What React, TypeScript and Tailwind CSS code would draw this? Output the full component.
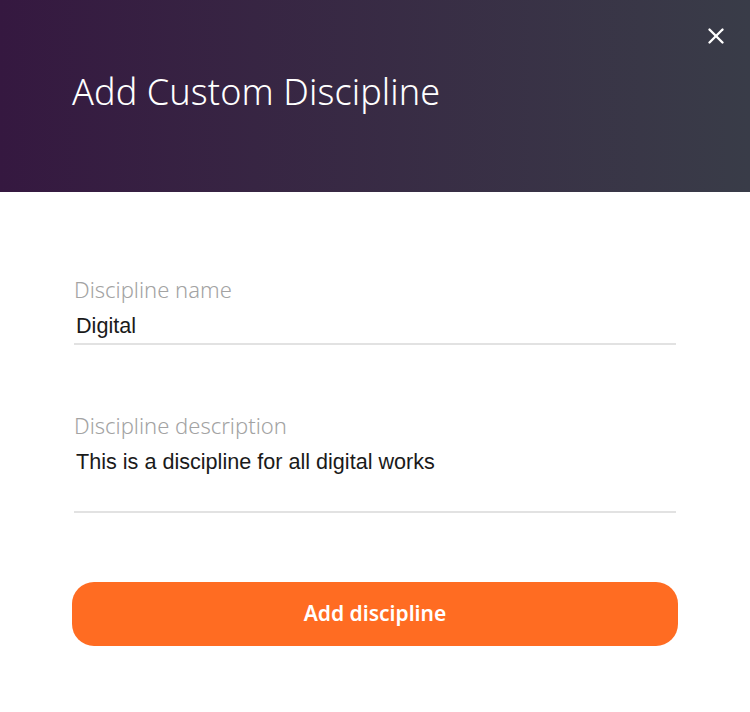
import { X } from "lucide-react";

export default function App() {
  return (
    <div className="h-[712px] w-[750px] bg-white">
      <header className="relative flex h-[192px] items-center bg-gradient-to-r from-[#351840] to-[#393c48] px-[72px]">
        <h1 className="pb-[8px] font-['Noto_Sans',sans-serif] text-[36px] font-light leading-none tracking-[0.1px] text-white">
          Add Custom Discipline
        </h1>
        <button className="absolute right-[21px] top-[23px] text-white">
          <X size={26} strokeWidth={2.2} />
        </button>
      </header>

      <div className="flex flex-col px-[72px] pt-[86px]">
        <div className="flex flex-col px-[2px]">
          <label className="font-['Noto_Sans',sans-serif] text-[22px] font-light leading-none text-[#a3a3a3]">
            Discipline name
          </label>
          <div className="mt-[13px] border-b-2 border-[#e2e2e2] pb-[4px] pl-[2px] font-['Liberation_Sans',sans-serif] text-[21.6px] leading-[26px] text-[#1a1a1a]">
            Digital
          </div>
        </div>

        <div className="mt-[69px] flex flex-col px-[2px]">
          <label className="font-['Noto_Sans',sans-serif] text-[22px] font-light leading-none text-[#a3a3a3]">
            Discipline description
          </label>
          <div className="mt-[13px] h-[64px] border-b-2 border-[#e2e2e2] pl-[2px] font-['Liberation_Sans',sans-serif] text-[21.6px] leading-[26px] text-[#1a1a1a]">
            This is a discipline for all digital works
          </div>
        </div>

        <button className="mt-[69px] flex h-[64px] w-[606px] items-center justify-center rounded-[22px] bg-[#ff6c22] font-['Noto_Sans',sans-serif] text-[21px] font-semibold text-white">
          Add discipline
        </button>
      </div>
    </div>
  );
}
